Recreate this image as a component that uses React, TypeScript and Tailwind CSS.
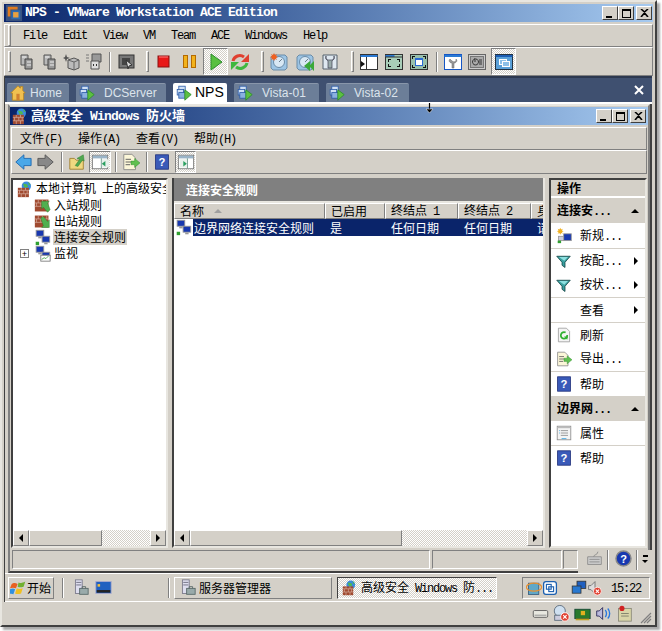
import React from "react";

const sans = "font-['Liberation_Sans','Noto_Sans_CJK_SC',sans-serif]";
const mono = "font-['Liberation_Mono','Noto_Sans_CJK_SC',monospace]";
const cjk = "font-['Noto_Sans_CJK_SC','Liberation_Sans',sans-serif]";
const raised = "border border-t-white border-l-white border-r-[#808080] border-b-[#808080]";
const sunken = "border border-t-[#808080] border-l-[#808080] border-r-white border-b-white";
const dither = "bg-[repeating-conic-gradient(#d4d0c8_0_25%,#ffffff_0_50%)] bg-[length:2px_2px]";

type P = { s?: number };

const Svg = ({ s = 20, children }: P & { children: React.ReactNode }) => (
  <svg width={s} height={s} viewBox="0 0 20 20" className="shrink-0">
    {children}
  </svg>
);

// western letters and dots in the guest are 6px wide
const M = ({ children }: { children: React.ReactNode }) => (
  <span className={`${mono} text-[12px] tracking-[-1.2px] whitespace-pre`}>{children}</span>
);

const Logo = () => (
  <Svg s={18}>
    <rect x="1" y="1" width="18" height="18" fill="#39527f" />
    <path d="M3 3h11v3H6v8H3z" fill="#e07b1f" />
    <path d="M7 7h10v10H7z" fill="#2d6ab0" />
    <path d="M9 9h6v6H9z" fill="#e8a040" />
  </Svg>
);

const Gears = () => (
  <Svg>
    <path d="M4 3h7v10H4z" fill="#b8b8b8" stroke="#555" />
    <path d="M8 7h7v10H8z" fill="#999" stroke="#444" />
    <path d="M5 5h4M10 10h4M10 13h4" stroke="#eee" />
  </Svg>
);
const Drive = () => (
  <Svg>
    <path d="M5 8l6-2 5 2v8l-5 2-6-2z" fill="#bbb" stroke="#555" />
    <path d="M5 8l6 2 5-2M11 10v8" stroke="#666" fill="none" />
    <path d="M3 2l1 3 3 1-3 1-1 3-1-3-2-1 2-1z" fill="#555" />
  </Svg>
);
const Usb = () => (
  <Svg>
    <path d="M8 2h9v8h-9z" fill="#999" stroke="#555" />
    <path d="M7 9h8v8H7z" fill="#ddd" stroke="#555" />
    <path d="M9 12h1v2H9zM12 12h1v2h-1z" fill="#333" />
    <path d="M2 3h3M2 6h3M2 9h3" stroke="#777" />
  </Svg>
);
const Snapshot = () => (
  <Svg>
    <rect x="3" y="3" width="15" height="13" fill="#777" stroke="#333" />
    <rect x="6" y="6" width="8" height="7" fill="#444" />
    <path d="M10 8l6 5-3 1-1 3z" fill="#ddd" stroke="#333" />
  </Svg>
);
const Stop = () => (
  <Svg>
    <rect x="4" y="4" width="11" height="11" fill="#e81818" stroke="#8a1010" />
    <path d="M5 5h9" stroke="#ff8080" />
  </Svg>
);
const Pause = () => (
  <Svg>
    <rect x="3.500" y="3.500" width="4" height="12" fill="#f2b21c" stroke="#b56a00" />
    <rect x="11.500" y="3.500" width="4" height="12" fill="#f2b21c" stroke="#b56a00" />
  </Svg>
);
const Play = () => (
  <Svg>
    <path d="M5 2l11 8-11 8z" fill="#58c040" stroke="#2b8c2b" />
  </Svg>
);
const Reset = () => (
  <Svg>
    <path d="M3 9a7 7 0 0 1 11-4" stroke="#e04030" strokeWidth="3" fill="none" />
    <path d="M19 2v8h-8z" fill="#e04030" />
    <path d="M17 11a7 7 0 0 1-11 4" stroke="#40b840" strokeWidth="3" fill="none" />
    <path d="M1 18v-8h8z" fill="#40b840" />
  </Svg>
);
const Clock = ({ back }: { back?: boolean }) => (
  <Svg>
    <path d="M4 3h12l2 2v11l-2 2H4l-2-2V5z" fill="#9cc4e4" stroke="#6a8ca8" />
    <circle cx="10" cy="10" r="5.500" fill="#d8e8f4" stroke="#6a8ca8" />
    <path d="M10 10l3-3" stroke="#6a7c8c" />
    {back ? <path d="M9 14l6-5v10zM14 14l5-5v10z" fill="#3aa83a" /> : <path d="M5 1l1 2 2-1-1 2 2 1-2 1 1 2-2-1-1 2-1-2-2 1 1-2-2-1 2-1-1-2 2 1z" fill="#f06020" />}
  </Svg>
);
const Manager = () => (
  <Svg>
    <path d="M3 3h14v14H3z" fill="#dfe8f0" stroke="#55606c" />
    <path d="M6 4c-1 3 1 4 2 5v7h4V9c1-1 3-2 2-5v3l-2 1H8L6 7z" fill="#9aa" stroke="#445" strokeWidth=".7" />
  </Svg>
);
const Panel = ({ kind }: { kind: number }) => (
  <Svg>
    {kind === 0 && (
      <>
        <rect x="1.500" y="2.500" width="17" height="15" fill="#fff" stroke="#333" />
        <path d="M1.500 3h17v2h-17z" fill="#2a7ad4" />
        <path d="M7.500 5v12" stroke="#333" />
        <path d="M2 9l4 3-4 3z" fill="#111" />
      </>
    )}
    {kind === 1 && (
      <>
        <rect x="1.500" y="2.500" width="17" height="15" fill="#a8cdb8" stroke="#333" />
        <path d="M1.500 3h9v2h-9z" fill="#2a7ad4" />
        <path d="M1.500 5h17" stroke="#333" />
        <path d="M4 7h3v1H5v2H4zM16 7h-3v1h2v2h1zM4 15h3v-1H5v-2H4zM16 15h-3v-1h2v-2h1z" fill="#111" />
      </>
    )}
    {kind === 2 && (
      <>
        <rect x="1.500" y="2.500" width="17" height="15" fill="#98c0ac" stroke="#333" />
        <rect x="6.500" y="6.500" width="7" height="7" fill="#fff" stroke="#2a6ad4" />
        <path d="M6 6h8v2H6z" fill="#2a6ad4" />
        <path d="M3 4h3v1H4v2H3zM17 4h-3v1h2v2h1zM3 16h3v-1H4v-2H3zM17 16h-3v-1h2v-2h1z" fill="#111" />
      </>
    )}
    {kind === 3 && (
      <>
        <rect x="1.500" y="2.500" width="17" height="15" fill="#fff" stroke="#1656c4" />
        <path d="M1.500 3h17v2h-17z" fill="#2a7ad4" />
        <path d="M7 7c-2 2 0 4 2 4v5h2v-5c2 0 4-2 2-4v2l-2 1-2-1z" fill="#999" stroke="#666" strokeWidth=".5" />
      </>
    )}
    {kind === 4 && (
      <>
        <rect x="1.500" y="2.500" width="17" height="15" fill="#ccc" stroke="#666" />
        <rect x="3.500" y="4.500" width="13" height="11" fill="#aaa" stroke="#777" />
        <path d="M8 7a3 3 0 1 0 1 0M8 6v4M12 8h3M12 10h3M12 12h3" stroke="#333" fill="none" />
      </>
    )}
    {kind === 5 && (
      <>
        <rect x="1.500" y="2.500" width="17" height="15" fill="#5aa0d8" stroke="#234" />
        <path d="M1.500 3h17v2h-17z" fill="#1c5eb4" />
        <rect x="5.500" y="7.500" width="7" height="5" fill="#8cc0e8" stroke="#fff" />
        <rect x="8.500" y="9.500" width="7" height="5" fill="#8cc0e8" stroke="#fff" />
      </>
    )}
  </Svg>
);

const Home = () => (
  <Svg s={16}>
    <path d="M10 1L1 10h2v9h14v-9h2l-3-3V2h-3v2z" fill="#f0c050" stroke="#b88420" />
    <rect x="8" y="11" width="4" height="8" fill="#d08030" />
  </Svg>
);
const Vm = ({ s = 16 }: P) => (
  <Svg s={s}>
    <rect x="3.500" y="1.500" width="8" height="7" fill="#cfe0f4" stroke="#2a5aa8" />
    <rect x="1.500" y="5.500" width="8" height="7" fill="#cfe0f4" stroke="#2a5aa8" />
    <rect x="3.500" y="9.500" width="8" height="7" fill="#8ab0e0" stroke="#2a5aa8" />
    <path d="M11 6l8 6-8 7z" fill="#5cc040" stroke="#2b8c2b" />
  </Svg>
);
const Firewall = ({ s = 17 }: P) => (
  <Svg s={s}>
    <circle cx="11" cy="6" r="5.500" fill="#3a8ae0" />
    <path d="M7 3l5 1 1 3-4 1zM13 1l3 3-2 1z" fill="#50b850" />
    <rect x="1" y="8" width="13" height="11" fill="#a04a30" />
    <path d="M1 11h13M1 15h13M5 8v3M10 8v3M3 11v4M8 11v4M12 11v4M5 15v4M10 15v4" stroke="#d8b0a0" strokeWidth=".8" />
  </Svg>
);
const Bricks = ({ down }: { down?: boolean }) => (
  <Svg s={17}>
    <rect x="1" y="3" width="16" height="14" fill="#a04a30" />
    <path d="M1 7h16M1 11h16M5 3v4M10 3v4M15 3v4M3 7v4M8 7v4M13 7v4" stroke="#d8b0a0" strokeWidth=".8" />
    {down ? (
      <path d="M8 6l3-2 5 6 2-2v9h-9l2-2z" fill="#50b050" stroke="#2a7a2a" strokeWidth=".5" />
    ) : (
      <path d="M19 15l-3 3-5-6-2 2V5h9l-2 2z" fill="#50b050" stroke="#2a7a2a" strokeWidth=".5" />
    )}
  </Svg>
);
const Pcs = ({ s = 17, chart }: P & { chart?: boolean }) => (
  <Svg s={s}>
    <rect x="2.500" y="1.500" width="9" height="7" fill="#1838b0" stroke="#999" />
    <rect x="9.500" y="8.500" width="9" height="7" fill="#1838b0" stroke="#999" />
    {chart ? (
      <>
        <rect x="8" y="12" width="11" height="7" fill="#fff" stroke="#777" />
        <path d="M9 17l3-2 2 1 3-3" stroke="#40a040" fill="none" />
      </>
    ) : (
      <>
        <path d="M12 16h4v2h-4z" fill="#999" />
        <rect x="2" y="15" width="4" height="4" fill="#30a030" />
      </>
    )}
    <path d="M5 9h4v2H5z" fill="#999" />
  </Svg>
);
const Back = ({ gray }: { gray?: boolean }) => (
  <Svg s={18}>
    {gray ? (
      <path d="M18 10l-9-8v4H1v8h8v4z" fill="#888" stroke="#555" />
    ) : (
      <path d="M2 10l9-8v4h8v8h-8v4z" fill="#4aa8e8" stroke="#1c68b0" />
    )}
  </Svg>
);
const UpFolder = () => (
  <Svg s={18}>
    <path d="M2 6h5l2 2h8v10H2z" fill="#f0d880" stroke="#a08030" />
    <path d="M8 14l5-7-3-1 7-4 1 7-2-1-5 7z" fill="#50a850" stroke="#2a7a2a" strokeWidth=".5" />
  </Svg>
);
const Pane = ({ right }: { right?: boolean }) => (
  <Svg s={18}>
    <rect x="1.500" y="2.500" width="17" height="15" fill="#fff" stroke="#777" />
    <path d="M2 3h16v3H2z" fill="#9ab4c8" />
    <path d="M11.500 6v11" stroke="#5a8a7a" />
    <rect x={right ? 3 : 12} y="7" width={8} height="9" fill="#e8f0ea" />
    {right ? <path d="M7 9l4 3-4 3z" fill="#2aa060" /> : <path d="M16 9l-4 3 4 3z" fill="#2aa060" />}
  </Svg>
);
const Export = ({ s = 18 }: P) => (
  <Svg s={s}>
    <path d="M2 1.500h9l4 4v13H2z" fill="#fbf6d8" stroke="#888" />
    <path d="M4 7h6M4 10h6M4 13h5" stroke="#555" />
    <path d="M10 9h4V6l6 5-6 5v-3h-4z" fill="#60c050" stroke="#2a8a2a" strokeWidth=".5" />
  </Svg>
);
const Help = ({ s = 16 }: P) => (
  <Svg s={s}>
    <rect x="2" y="1" width="16" height="18" fill="#3a5ab8" stroke="#1c2c78" />
    <text x="10" y="15" textAnchor="middle" fontSize="14" fontWeight="700" fill="#fff" fontFamily="Liberation Sans">?</text>
  </Svg>
);
const Funnel = () => (
  <Svg s={15}>
    <path d="M1 3h18l-7 8v7l-4-3v-4z" fill="#3aa0a0" stroke="#0c3c3c" />
    <path d="M4 4h12l-5 5z" fill="#8ce0e0" />
  </Svg>
);
const NewRule = () => (
  <Svg s={17}>
    <path d="M5 1l1 2 2-1-1 2 2 1-2 1 1 2-2-1-1 2-1-2-2 1 1-2-2-1 2-1-1-2 2 1z" fill="#f0b020" />
    <rect x="9" y="8" width="9" height="8" fill="#1838b0" stroke="#999" />
    <rect x="3" y="11" width="6" height="5" fill="#ccd" stroke="#999" />
    <rect x="2" y="16" width="4" height="3" fill="#30a030" />
  </Svg>
);
const Refresh = () => (
  <Svg s={16}>
    <path d="M3 1.500h10l4 4v13H3z" fill="#f4f4f4" stroke="#999" />
    <path d="M14 10a4 4 0 1 1-2-3" stroke="#30b030" strokeWidth="2.2" fill="none" />
    <path d="M10 12l5 0-1 4z" fill="#30b030" />
  </Svg>
);
const Props = () => (
  <Svg s={16}>
    <rect x="1.500" y="1.500" width="17" height="17" fill="#f4f4f4" stroke="#888" />
    <path d="M2 2h16v2H2z" fill="#bbb" />
    <path d="M6 7h9M6 10h9M6 13h9" stroke="#888" />
    <path d="M4 7h1M4 10h1M7 17h6" stroke="#30a0e0" />
  </Svg>
);
const ServerBag = () => (
  <Svg s={17}>
    <rect x="4" y="1" width="8" height="16" fill="#dde" stroke="#778" />
    <path d="M5 4h6M5 7h6" stroke="#667" />
    <rect x="9" y="11" width="10" height="7" fill="#9aa" stroke="#566" />
    <path d="M12 11V9h4v2" stroke="#566" fill="none" />
  </Svg>
);
const Desktop = () => (
  <Svg s={17}>
    <rect x="1" y="3" width="18" height="14" fill="#2060c0" stroke="#aac" />
    <rect x="2" y="13" width="16" height="3" fill="#222" />
    <rect x="3" y="6" width="3" height="3" fill="#f0c040" />
  </Svg>
);
const WinFlag = () => (
  <Svg s={17}>
    <path d="M2 6c3-2 4-1 7 0l-2 5c-3-1-4-1-7 0z" fill="#e86020" />
    <path d="M10 4c3 1 4 1 8-1l-2 6c-3 1-5 1-7 0z" fill="#70b030" />
    <path d="M0 12c3-1 4-1 6 0l-2 6c-2-1-3-1-6 0z" fill="#3090e0" />
    <path d="M8 11c2 1 4 1 7 0l-2 6c-3 1-5 1-7 0z" fill="#f0c020" />
  </Svg>
);

const Grip = () => <div className={`w-[3px] h-[21px] ${raised} shrink-0`} />;
const Sep = () => <div className="w-[2px] h-[20px] border-l border-l-[#808080] border-r border-r-white shrink-0" />;

const Slot = ({ w, active, children }: { w: string; active?: boolean; children?: React.ReactNode }) => (
  <div className={`${w} h-full flex items-center justify-center shrink-0`}>
    {active ? (
      <div className={`flex h-full w-full items-center justify-center ${sunken} ${dither}`}>{children}</div>
    ) : (
      children
    )}
  </div>
);

const Winbtn = ({ k }: { k: string }) => (
  <div className="w-[16px] h-[14px] bg-[#d4d0c8] border border-t-white border-l-white border-r-[#404040] border-b-[#404040] flex items-center justify-center shrink-0">
    {k === "min" && <div className="w-[6px] h-[2px] bg-black mt-[7px] -ml-[2px]" />}
    {k === "max" && <div className="w-[9px] h-[9px] border border-black border-t-2" />}
    {k === "x" && (
      <svg width="9" height="8" viewBox="0 0 9 8">
        <path d="M1 0l3.500 3L8 0M1 8l3.500-4L8 8" stroke="#000" strokeWidth="1.6" fill="none" />
      </svg>
    )}
  </div>
);

const Tab = ({ w, gap, active, icon, label }: { w: string; gap: string; active?: boolean; icon: React.ReactNode; label: string }) => (
  <div
    className={`${w} h-[19px] flex items-center shrink-0 rounded-t-[2px] pl-[3px] ${
      active ? "bg-white text-black text-[14px]" : "bg-[#6c7e98] text-[#dce4ec] text-[12px] border-t border-t-[#8896aa]"
    } ${sans}`}
  >
    {icon}
    <span className={gap}>{label}</span>
  </div>
);

const ScrollBtn = ({ dir }: { dir: "l" | "r" }) => (
  <div className={`w-[16px] h-full ${raised} bg-[#d4d0c8] flex items-center justify-center shrink-0`}>
    <div
      className={
        dir === "l"
          ? "w-0 h-0 border-y-[4px] border-y-transparent border-r-[4px] border-r-black"
          : "w-0 h-0 border-y-[4px] border-y-transparent border-l-[4px] border-l-black"
      }
    />
  </div>
);

const HScroll = ({ thumb }: { thumb: string }) => (
  <div className={`h-[16px] flex ${dither} shrink-0`}>
    <ScrollBtn dir="l" />
    <div className={`${thumb} h-full ${raised} bg-[#d4d0c8]`} />
    <div className="flex-1" />
    <ScrollBtn dir="r" />
  </div>
);

const TreeRow = ({ icon, label, selected, plus }: { icon: React.ReactNode; label: string; selected?: boolean; plus?: boolean }) => (
  <div className="h-[16px] flex items-center pl-[7px]">
    <div className="w-[9px] flex items-center justify-center shrink-0">
      {plus && (
        <div className="w-[9px] h-[9px] shrink-0 border border-[#808080] flex items-center justify-center text-[9px] leading-none text-black bg-white">
          +
        </div>
      )}
    </div>
    <div className="ml-[5px] flex items-center">{icon}</div>
    <span className={`ml-[2px] px-[1px] leading-[16px] ${selected ? "bg-[#d4d0c8]" : ""}`}>{label}</span>
  </div>
);

const HeaderCell = ({ w, children, arrow }: { w: string; children: React.ReactNode; arrow?: boolean }) => (
  <div className={`${w} h-full shrink-0 flex items-center pl-[5px] bg-[#d4d0c8] ${raised} overflow-hidden whitespace-nowrap leading-[14px]`}>
    <span>{children}</span>
    {arrow && <div className="ml-[10px] w-0 h-0 border-x-[4px] border-x-transparent border-b-[4px] border-b-[#a0a0a0]" />}
  </div>
);

const Action = ({ icon, label, dots, arrow, h, line = true }: { icon?: React.ReactNode; label: string; dots?: boolean; arrow?: boolean; h: string; line?: boolean }) => (
  <div className={`${h} flex items-center pl-[5px] pr-[7px] shrink-0 ${line ? "border-b border-b-[#d4d0c8]" : ""}`}>
    <div className="w-[24px] flex items-center shrink-0">{icon}</div>
    <span className="whitespace-nowrap">
      {label}
      {dots && <M>...</M>}
    </span>
    {arrow && <div className="ml-auto w-0 h-0 border-y-[4px] border-y-transparent border-l-[4px] border-l-black" />}
  </div>
);

const Group = ({ label }: { label: string }) => (
  <div className="h-[25px] flex items-center pl-[6px] pr-[6px] bg-[#d4d0c8] font-bold whitespace-nowrap shrink-0">
    <span>
      {label}
      <M>...</M>
    </span>
    <div className="ml-auto w-0 h-0 border-x-[4px] border-x-transparent border-b-[4px] border-b-black" />
  </div>
);

export default function App() {
  return (
    <div className={`relative w-[662px] h-[631px] bg-white overflow-hidden ${cjk} text-[12px] text-black`}>
      {/* outer vmware window */}
      <div className="w-[657px] h-[627px] bg-[#d4d0c8] border-2 border-t-[#e8e6e0] border-l-[#e8e6e0] border-r-[#404040] border-b-[#404040] pl-[2px] pr-[2px] pt-[2px] shadow-[3px_3px_2px_#aaaaaa] flex flex-col">
        {/* title */}
        <div className="h-[18px] flex items-center bg-gradient-to-r from-[#0a246a] to-[#a6caf0] pl-[1px] pr-[1px] shrink-0">
          <Logo />
          <span className={`ml-[2px] text-white font-bold text-[13px] tracking-[-0.8px] whitespace-nowrap ${mono}`}>
            NPS - VMware Workstation ACE Edition
          </span>
          <div className="ml-auto flex">
            <Winbtn k="min" />
            <Winbtn k="max" />
            <div className="ml-[2px]">
              <Winbtn k="x" />
            </div>
          </div>
        </div>

        {/* menu */}
        <div className={`mt-[2px] h-[23px] flex items-center pl-[3px] ${raised} shrink-0 ${mono} text-[12px] tracking-[-1.2px]`}>
          <Grip />
          <span className="ml-[12px] w-[40px]">File</span>
          <span className="w-[40px]">Edit</span>
          <span className="w-[40px]">View</span>
          <span className="w-[28px]">VM</span>
          <span className="w-[40px]">Team</span>
          <span className="w-[34px]">ACE</span>
          <span className="w-[58px]">Windows</span>
          <span>Help</span>
        </div>

        {/* toolbar */}
        <div className={`h-[29px] flex items-center pl-[3px] ${raised} shrink-0`}>
          <Grip />
          <Slot w="w-[4px]" />
          <Slot w="w-[23px]"><Gears /></Slot>
          <Slot w="w-[23px]"><Gears /></Slot>
          <Slot w="w-[24px]"><Drive /></Slot>
          <Slot w="w-[18px]"><Usb /></Slot>
          <Slot w="w-[14px]"><Sep /></Slot>
          <Slot w="w-[18px]"><Snapshot /></Slot>
          <Slot w="w-[11px]" />
          <Grip />
          <Slot w="w-[2px]" />
          <Slot w="w-[26px]"><Stop /></Slot>
          <Slot w="w-[25px]"><Pause /></Slot>
          <Slot w="w-[1px]" />
          <Slot w="w-[25px]" active><Play /></Slot>
          <Slot w="w-[24px]"><Reset /></Slot>
          <Slot w="w-[9px]" />
          <Grip />
          <Slot w="w-[2px]" />
          <Slot w="w-[26px]"><Clock /></Slot>
          <Slot w="w-[25px]"><Clock back /></Slot>
          <Slot w="w-[26px]"><Manager /></Slot>
          <Slot w="w-[8px]" />
          <Grip />
          <Slot w="w-[2px]" />
          <Slot w="w-[25px]"><Panel kind={0} /></Slot>
          <Slot w="w-[25px]"><Panel kind={1} /></Slot>
          <Slot w="w-[26px]"><Panel kind={2} /></Slot>
          <Slot w="w-[10px]"><Sep /></Slot>
          <Slot w="w-[22px]"><Panel kind={3} /></Slot>
          <Slot w="w-[26px]"><Panel kind={4} /></Slot>
          <Slot w="w-[1px]" />
          <Slot w="w-[25px]" active><Panel kind={5} /></Slot>
        </div>

        {/* vm display */}
        <div className="w-[648px] flex flex-col border-l border-l-[#404040] shrink-0">
          {/* tab strip */}
          <div className="h-[26px] bg-[#3f5070] border-t-2 border-t-[#2c3850] flex items-end pl-[2px] pr-[8px] gap-[7px] shrink-0">
            <Tab w="w-[62px]" gap="ml-[4px]" icon={<Home />} label="Home" />
            <Tab w="w-[90px]" gap="ml-[9px]" icon={<Vm />} label="DCServer" />
            <Tab w="w-[54px]" gap="ml-[3px]" active icon={<Vm />} label="NPS" />
            <Tab w="w-[85px]" gap="ml-[9px]" icon={<Vm />} label="Vista-01" />
            <Tab w="w-[83px]" gap="ml-[9px]" icon={<Vm />} label="Vista-02" />
            <svg width="10" height="10" viewBox="0 0 10 10" className="ml-auto mb-[7px] shrink-0">
              <path d="M1 1l8 8M9 1l-8 8" stroke="#fff" strokeWidth="2" />
            </svg>
          </div>

          <div className="flex flex-col border-t-2 border-t-white">
            {/* guest window */}
            <div className="ml-[3px] w-[642px] h-[446px] border-2 border-b-0 border-t-[#e8e6e0] border-l-[#808080] border-r-[#808080] shadow-[2px_0_0_#404040] bg-[#d4d0c8] flex flex-col pt-[1px] px-[1px] shrink-0">
              <div className="h-[18px] -mx-[1px] flex items-center bg-gradient-to-r from-[#0a246a] to-[#a6caf0] pl-[2px] pr-[2px] shrink-0">
                <Firewall />
                <span className="ml-[2px] text-white font-bold whitespace-nowrap text-[13px]">
                  高级安全
                  <span className={`${mono} tracking-[-0.8px] whitespace-pre`}> Windows </span>
                  防火墙
                </span>
                <div className="ml-auto flex">
                  <Winbtn k="min" />
                  <Winbtn k="max" />
                  <div className="ml-[2px]">
                    <Winbtn k="x" />
                  </div>
                </div>
              </div>

              <div className={`mt-[2px] h-[23px] ${raised} flex items-center pl-[8px] shrink-0`}>
                <span className="w-[58px]">文件<M>(F)</M></span>
                <span className="w-[58px]">操作<M>(A)</M></span>
                <span className="w-[58px]">查看<M>(V)</M></span>
                <span>帮助<M>(H)</M></span>
              </div>

              <div className={`h-[24px] ${raised} flex items-center shrink-0`}>
                <Slot w="w-[22px]"><Back /></Slot>
                <Slot w="w-[24px]"><Back gray /></Slot>
                <Slot w="w-[8px]"><Sep /></Slot>
                <Slot w="w-[22px]"><UpFolder /></Slot>
                <Slot w="w-[1px]" />
                <Slot w="w-[22px]" active><Pane /></Slot>
                <Slot w="w-[10px]"><Sep /></Slot>
                <Slot w="w-[20px]"><Export /></Slot>
                <Slot w="w-[12px]"><Sep /></Slot>
                <Slot w="w-[18px]"><Help /></Slot>
                <Slot w="w-[4px]" />
                <Slot w="w-[21px]" active><Pane right /></Slot>
              </div>

              <div className="mt-[4px] h-[370px] flex gap-[4px] shrink-0">
                {/* tree */}
                <div className="w-[157px] flex flex-col border-2 border-t-[#404040] border-l-[#404040] border-r-[#e8e6e0] border-b-[#e8e6e0] shrink-0">
                  <div className="flex-1 bg-white pt-px overflow-hidden whitespace-nowrap">
                    <div className="h-[16px] flex items-center pl-[4px]">
                      <Firewall />
                      <span className="ml-[2px]">本地计算机<M> </M>上的高级安全</span>
                    </div>
                    <TreeRow icon={<Bricks />} label="入站规则" />
                    <TreeRow icon={<Bricks down />} label="出站规则" />
                    <TreeRow icon={<Pcs />} label="连接安全规则" selected />
                    <TreeRow plus icon={<Pcs chart />} label="监视" />
                  </div>
                  <HScroll thumb="w-[73px]" />
                </div>

                {/* middle */}
                <div className="w-[373px] flex flex-col border-2 border-t-0 border-l-[#404040] border-r-[#e8e6e0] border-b-[#e8e6e0] shrink-0">
                  <div className="h-[23px] bg-[#808080] text-white font-bold flex items-center pl-[12px] shrink-0">连接安全规则</div>
                  <div className="flex-1 bg-white border-t-2 border-t-[#e8e6e0] flex flex-col overflow-hidden">
                    <div className="h-[16px] flex shrink-0 whitespace-nowrap overflow-hidden">
                      <HeaderCell w="w-[151px]" arrow>名称</HeaderCell>
                      <HeaderCell w="w-[60px]">已启用</HeaderCell>
                      <HeaderCell w="w-[73px]">终结点<M> 1</M></HeaderCell>
                      <HeaderCell w="w-[73px]">终结点<M> 2</M></HeaderCell>
                      <HeaderCell w="w-[20px]">身</HeaderCell>
                    </div>
                    <div className="h-[17px] flex items-center shrink-0 whitespace-nowrap">
                      <div className="w-[19px] flex justify-center shrink-0"><Pcs /></div>
                      <div className="flex-1 h-full bg-[#0a246a] text-white flex items-center overflow-hidden">
                        <span className="w-[137px] pl-[1px] shrink-0">边界网络连接安全规则</span>
                        <span className="w-[61px] shrink-0">是</span>
                        <span className="w-[73px] shrink-0">任何日期</span>
                        <span className="w-[73px] shrink-0">任何日期</span>
                        <span>请</span>
                      </div>
                    </div>
                  </div>
                  <HScroll thumb="w-[212px]" />
                </div>

                {/* actions */}
                <div className="w-[98px] flex flex-col border-2 border-t-[#404040] border-l-[#404040] border-r-[#e8e6e0] border-b-[#e8e6e0] bg-white overflow-hidden shrink-0">
                  <div className="h-[18px] bg-[#d4d0c8] font-bold flex items-center pl-[6px] border-b-2 border-b-white shrink-0">操作</div>
                  <Group label="连接安" />
                  <Action h="h-[26px]" icon={<NewRule />} label="新规" dots />
                  <Action h="h-[24px]" icon={<Funnel />} label="按配" dots arrow line={false} />
                  <Action h="h-[25px]" icon={<Funnel />} label="按状" dots arrow />
                  <Action h="h-[25px]" label="查看" arrow />
                  <Action h="h-[24px]" icon={<Refresh />} label="刷新" line={false} />
                  <Action h="h-[25px]" icon={<Export s={16} />} label="导出" dots />
                  <Action h="h-[24px]" icon={<Help />} label="帮助" line={false} />
                  <Group label="边界网" />
                  <Action h="h-[25px]" icon={<Props />} label="属性" />
                  <Action h="h-[24px]" icon={<Help />} label="帮助" line={false} />
                </div>
              </div>
            </div>

            {/* status row */}
            <div className="h-[23px] flex shrink-0">
              <div className="ml-[3px] w-[570px] pl-[2px] border-l-2 border-l-[#808080] border-b-2 border-b-[#404040] flex gap-[1px] shrink-0">
                <div className={`w-[419px] h-[19px] ${sunken}`} />
                <div className={`ml-[1px] w-[131px] h-[19px] ${sunken}`} />
                <div className={`w-[15px] h-[19px] ${sunken}`} />
              </div>
              <div className="ml-[8px]">
                <Svg s={17}>
                  <path d="M2 8h16v9H2z" fill="#ccc" stroke="#888" />
                  <path d="M4 11h12M4 14h12M9 8c0-3 5-2 5-6" stroke="#888" fill="none" />
                </Svg>
              </div>
              <div className="ml-[4px]"><Sep /></div>
              <div className="ml-[6px]">
                <svg width="17" height="17" viewBox="0 0 17 17">
                  <circle cx="8.500" cy="8.500" r="7.500" fill="#1838b0" stroke="#888" strokeWidth="1.500" />
                  <text x="8.500" y="12.500" textAnchor="middle" fontSize="11" fontWeight="700" fill="#fff" fontFamily="Liberation Sans">?</text>
                </svg>
              </div>
              <div className="ml-[4px]"><Sep /></div>
              <div className="ml-[4px] mt-[5px] flex flex-col items-center gap-[3px]">
                <div className="w-[5px] h-[2px] bg-black" />
                <div className="w-0 h-0 border-x-[3px] border-x-transparent border-t-[3px] border-t-black" />
              </div>
            </div>

            {/* taskbar */}
            <div className="h-[29px] flex items-center shrink-0 border-t border-t-white border-b border-b-white">
              <div className={`ml-[3px] w-[46px] h-[22px] flex items-center ${raised} border-r-[#404040] border-b-[#404040] pl-[1px] shrink-0`}>
                <WinFlag />
                <span>开始</span>
              </div>
              <div className="ml-[8px]"><Sep /></div>
              <div className="ml-[8px]"><ServerBag /></div>
              <div className="ml-[6px]"><Desktop /></div>
              <div className="ml-[56px]"><Sep /></div>
              <div className={`ml-[4px] w-[158px] h-[22px] flex items-center pl-[4px] ${raised} border-r-[#404040] border-b-[#404040] whitespace-nowrap shrink-0`}>
                <ServerBag />
                <span className="ml-[3px]">服务器管理器</span>
              </div>
              <div className={`ml-[5px] w-[160px] h-[22px] flex items-center pl-[4px] border border-t-[#404040] border-l-[#404040] border-r-white border-b-white ${dither} whitespace-nowrap overflow-hidden shrink-0`}>
                <Firewall s={16} />
                <span className="ml-[3px]">高级安全<M> Windows </M>防<M>...</M></span>
              </div>
              <div className={`ml-[25px] w-[128px] h-[22px] flex items-center pl-[3px] ${sunken} shrink-0`}>
                <Svg s={16}>
                  <rect x="3" y="4" width="13" height="14" fill="#60a8c8" stroke="#335577" />
                  <ellipse cx="10" cy="9" rx="9.500" ry="5" fill="none" stroke="#e89030" strokeWidth="1.500" />
                </Svg>
                <Svg s={16}>
                  <rect x="2" y="2" width="16" height="16" rx="3" fill="#fff" stroke="#1c60b0" strokeWidth="1.600" />
                  <rect x="5.500" y="5.500" width="6" height="6" fill="none" stroke="#1c60b0" strokeWidth="1.400" />
                  <rect x="8.500" y="8.500" width="6" height="6" fill="none" stroke="#1c60b0" strokeWidth="1.400" />
                </Svg>
                <div className="ml-[13px]">
                  <Svg s={16}>
                    <rect x="7.500" y="1.500" width="11" height="9" fill="#2060c0" stroke="#333" />
                    <rect x="1.500" y="7.500" width="11" height="9" fill="#2878d0" stroke="#333" />
                  </Svg>
                </div>
                <Svg s={16}>
                  <path d="M2 7h3l5-5v15l-5-5H2z" fill="#ddd" stroke="#666" />
                  <circle cx="13" cy="14" r="5" fill="#e04030" stroke="#fff" />
                  <path d="M11 12l4 4M15 12l-4 4" stroke="#fff" strokeWidth="1.400" />
                </Svg>
                <span className="ml-[8px]"><M>15:22</M></span>
              </div>
            </div>
          </div>
        </div>

        {/* vmware status bar */}
        <div className="h-[23px] flex items-center justify-end pr-[1px] gap-[4px] shrink-0">
          <Svg s={17}>
            <rect x="1.500" y="6.500" width="17" height="8" rx="1.500" fill="#e8e8e0" stroke="#555" />
            <path d="M3 12h14" stroke="#888" />
          </Svg>
          <Svg s={17}>
            <circle cx="8" cy="7" r="6.500" fill="#cfe0f0" stroke="#556677" />
            <rect x="2" y="12" width="12" height="6" fill="#ccd" stroke="#556677" />
            <circle cx="14" cy="14" r="5" fill="#e04030" stroke="#fff" />
            <path d="M12 12l4 4M16 12l-4 4" stroke="#fff" strokeWidth="1.400" />
          </Svg>
          <Svg s={17}>
            <rect x="1" y="5" width="18" height="11" fill="#2a7a2a" stroke="#114433" />
            <rect x="8" y="7" width="5" height="5" fill="#e0b020" />
            <path d="M2 17h16" stroke="#c0a020" strokeWidth="2" />
          </Svg>
          <Svg s={17}>
            <path d="M2 7h3l4-4v14l-4-4H2z" fill="#bbd" stroke="#222255" />
            <path d="M12 6c2 2 2 6 0 8M15 4c3 3 3 9 0 12" stroke="#2878e0" strokeWidth="1.600" fill="none" />
          </Svg>
          <Svg s={17}>
            <rect x="3" y="4" width="15" height="15" fill="#d8d4a8" stroke="#888877" />
            <circle cx="7" cy="4" r="3" fill="#d02020" />
            <path d="M6 10h9M6 13h9" stroke="#777766" />
          </Svg>
          <svg width="12" height="12" viewBox="0 0 12 12" className="shrink-0 ml-[3px] mt-[8px]">
            <path d="M11 1L1 11M11 4L4 11M11 7L7 11" stroke="#808080" strokeWidth="1.200" />
          </svg>
        </div>
      </div>

      {/* mouse pointer */}
      <svg width="9" height="11" viewBox="0 0 9 11" className="absolute left-[425px] top-[103px]">
        <path d="M4.500 0v7" stroke="#000" strokeWidth="1.200" />
        <path d="M1 6h7l-3.500 4z" fill="#000" stroke="#fff" strokeWidth=".5" />
      </svg>
    </div>
  );
}
